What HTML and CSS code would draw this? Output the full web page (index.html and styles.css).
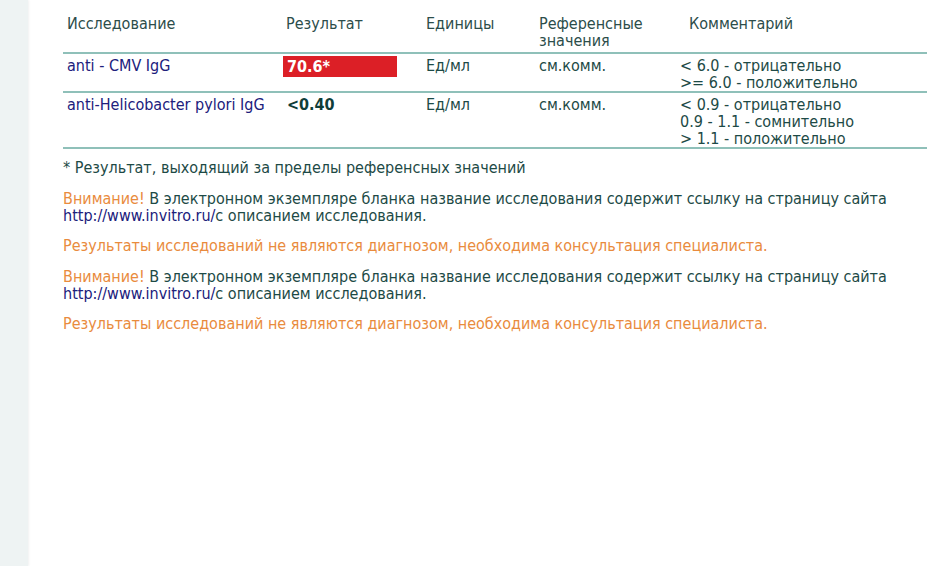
FILE: index.html
```html
<!DOCTYPE html>
<html>
<head>
  <meta charset="utf-8">
  <title>Результаты исследований</title>
  <link rel="stylesheet" href="styles.css">
</head>
<body>
  <div id="page">
    <div id="side"></div>
    <div id="main">
      <table class="results">
        <tr class="head">
          <td class="c-name">Исследование</td>
          <td class="c-res">Результат</td>
          <td class="c-unit">Единицы</td>
          <td class="c-ref">Референсные<br>значения</td>
          <td class="c-com head-com">Комментарий</td>
        </tr>
        <tr>
          <td class="c-name"><a href="#">anti - CMV IgG</a></td>
          <td class="c-res"><div class="res-bad">70.6*</div></td>
          <td class="c-unit">Ед/мл</td>
          <td class="c-ref">см.комм.</td>
          <td class="c-com">&lt; 6.0 - отрицательно<br>&gt;= 6.0 - положительно</td>
        </tr>
        <tr>
          <td class="c-name"><a href="#">anti-Helicobacter pylori IgG</a></td>
          <td class="c-res"><div class="res-ok">&lt;0.40</div></td>
          <td class="c-unit">Ед/мл</td>
          <td class="c-ref">см.комм.</td>
          <td class="c-com">&lt; 0.9 - отрицательно<br>0.9 - 1.1 - сомнительно<br>&gt; 1.1 - положительно</td>
        </tr>
      </table>

      <p class="note first">* Результат, выходящий за пределы референсных значений</p>

      <p class="note"><span class="warn">Внимание!</span> В электронном экземпляре бланка название исследования содержит ссылку на страницу сайта<br><a href="#">http://www.invitro.ru/</a>с описанием исследования.</p>
      <p class="note warn short">Результаты исследований не являются диагнозом, необходима консультация специалиста.</p>

      <p class="note"><span class="warn">Внимание!</span> В электронном экземпляре бланка название исследования содержит ссылку на страницу сайта<br><a href="#">http://www.invitro.ru/</a>с описанием исследования.</p>
      <p class="note warn short">Результаты исследований не являются диагнозом, необходима консультация специалиста.</p>
    </div>
  </div>
</body>
</html>
```

FILE: styles.css
```css
body {
  margin: 0;
  padding: 0;
  background-color: #ffffff;
  color: #1d4a46;
  font-family: "DejaVu Sans Condensed", "DejaVu Sans", sans-serif;
  font-stretch: condensed;
  font-size: 16px;
}
#page {
  display: flex;
  min-height: 566px;
}
#side {
  width: 28px;
  flex-shrink: 0;
  background-color: #eef3f3;
  box-shadow: 1px 0 2px rgba(0, 0, 0, 0.06);
}
#main {
  flex: 1;
  padding: 14px 0 0 35px;
}
a {
  color: #20207c;
  text-decoration: none;
}
.results {
  width: 100%;
  border-collapse: collapse;
  line-height: 17px;
}
.results td {
  vertical-align: top;
  padding: 3px 4px 0 4px;
  border-bottom: 2px solid #8fc0b9;
}
.results .head td {
  color: #2c4d4a;
  padding: 1px 4px 3px 4px;
}
.c-name { width: 212px; }
.c-res { width: 132px; padding-left: 0 !important; }
.c-unit { width: 105px; }
.c-ref { width: 133px; }
.results .head .c-res { padding-left: 3px !important; }
.results .head .head-com { padding-left: 13px; }
.res-bad {
  width: 110px;
  height: 21px;
  line-height: 21px;
  margin-top: -1px;
  padding-left: 4px;
  background-color: #dc1f26;
  color: #ffffff;
  font-weight: bold;
}
.res-ok {
  padding-left: 4px;
  line-height: 17px;
  color: #0f3d39;
  font-weight: bold;
}
.note {
  margin: 14px 0 0 0;
  line-height: 17px;
  color: #1d4a46;
}
.note.first {
  margin-top: 10px;
}
.note.short {
  margin-top: 13px;
}
.warn {
  color: #e98b3d;
}
```
